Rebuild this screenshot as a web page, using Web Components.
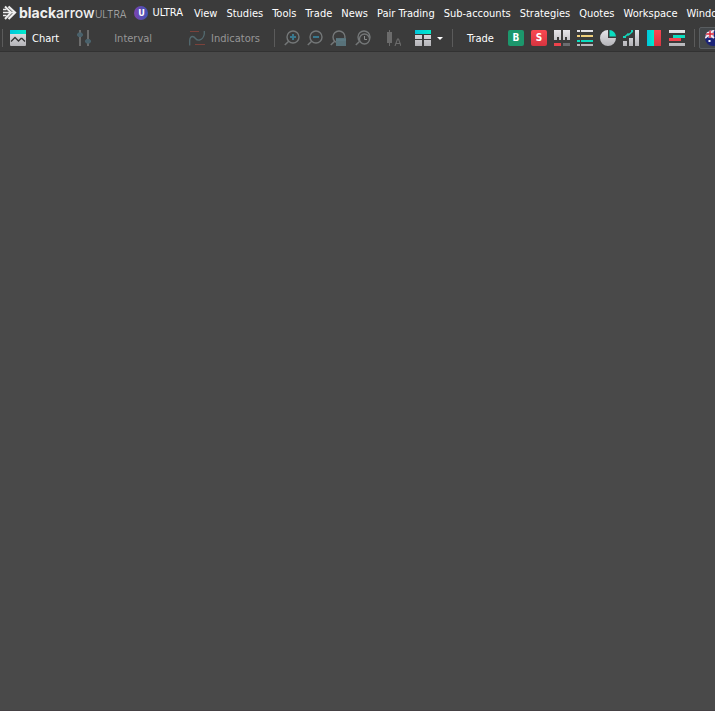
<!DOCTYPE html>
<html lang="en">
<head>
<meta charset="utf-8">
<title>blackarrow ULTRA</title>
<style>
html, body { height: 100%; margin: 0; }
body { background: #494949; overflow: hidden; font: 11px/16px "DejaVu Sans Condensed", "DejaVu Sans", sans-serif; color: #fff; }
</style>
</head>
<body>
<trading-app></trading-app>
<script>
const grad = '<defs><linearGradient id="g" x1="0" y1="0" x2="0" y2="16" gradientUnits="userSpaceOnUse"><stop stop-color="#e6e5e9"/><stop offset="1" stop-color="#b4b4b8"/></linearGradient><linearGradient id="c" x1="0" y1="0" x2="1" y2="0"><stop stop-color="#00c5dd"/><stop offset="1" stop-color="#00ecca"/></linearGradient><linearGradient id="r" x1="0" y1="0" x2="0" y2="1"><stop stop-color="#f94852"/><stop offset="1" stop-color="#d7343f"/></linearGradient></defs>';
const lens = '<circle cx="9" cy="7" r="6" fill="none" stroke="#747778" stroke-width="1.4"/><path d="M4.7 11.2L.8 15" stroke="#747778" stroke-width="1.5"/>';
const icons = {
  chart: '<rect width="16" height="16" rx="1" fill="url(#g)"/><rect width="16" height="4" fill="url(#c)"/><path d="M1 11.500L5 7.500L8.500 11L11 8.500L12 8.500L15 11.500" fill="none" stroke="#333" stroke-width="1.300"/>',
  sliders: '<path d="M4 0V16M12 0V16" stroke="#6c6c6c" stroke-width="2"/><path d="M2.500 2.500h3l1.500 1.500v1.500l-1.500 1.500h-3l-1.500-1.500v-1.500zM10.500 9h3l1.500 1.500v1.500l-1.500 1.500h-3l-1.500-1.500v-1.500z" fill="#4a626c"/>',
  indicators: '<path d="M1 1.500H10M6 14.500H16" stroke="#7b423b" stroke-width="1.200"/><path d="M.7 15.500V10.500Q1 6.500 3.500 6.500Q5 6.500 6.500 8.500T10.500 10Q14.500 9 15.300 4V1" fill="none" stroke="#536a70" stroke-width="1.300"/>',
  zoomIn: lens + '<path d="M9 4V10M6 7H12" stroke="#39788e" stroke-width="2"/>',
  zoomOut: lens + '<path d="M6 7H12" stroke="#39788e" stroke-width="2"/>',
  zoomArea: lens + '<rect x="6" y="8" width="10" height="8" fill="#58727a"/><path d="M6 10h10" stroke="#607f88"/>',
  zoomTime: lens + '<circle cx="9.500" cy="9" r="5" fill="#3b3b3b" stroke="#747778" stroke-width="1.300"/><path d="M9.500 6V9.500H12" fill="none" stroke="#8a8c8d"/>',
  candle: '<path d="M4.500 0V16" stroke="#6b6b6b"/><rect x="2" y="2" width="5" height="11" fill="#6b6b6b"/><path d="M10 16L12.500 9h1L16 16M11 13.500h4" fill="none" stroke="#6b6b6b" stroke-width="1.100"/>',
  grid: '<path d="M0 5h7v4H0zM9 5h7v4H9zM0 10h7v6H0zM9 10h7v6H9z" fill="url(#g)"/><rect width="16" height="4" fill="url(#c)"/>',
  buy: '<rect width="16" height="16" rx="2" fill="#1c976c"/>',
  sell: '<rect width="16" height="16" rx="2" fill="url(#r)"/>',
  ladder: '<path d="M0 0H7V10H5V7H3V10H0zM9 0H16V10H13V7H11V10H9z" fill="url(#g)"/><rect y="13" width="7" height="3" fill="#ed424b"/><rect x="9" y="13" width="7" height="3" fill="#6b6c6f"/>',
  list: '<path d="M0 0h3v2H0zM4 0h12v2H4zM0 14h3v2H0zM4 14h12v2H4z" fill="url(#g)"/><path d="M0 5h3v2H0zM4 5h12v2H4z" fill="#efcf7c"/><path d="M0 10h3v2H0zM4 10h12v2H4z" fill="#0bddc0"/>',
  pie: '<path d="M8 0A8 8 0 1 0 16 8H8z" fill="url(#g)"/><path d="M9.500 0A7 7 0 0 1 16 6.500H9.500z" fill="#0bddc0"/>',
  growth: '<path d="M0 11h4v5H0zM6 8h4v8H6zM12 0h4v16h-4z" fill="url(#g)"/><path d="M1.500 7L4.500 4.500H6L9.500 1.500" fill="none" stroke="#12d5ba" stroke-width="1.500"/><path d="M0 6h3v2H0zM4 3.500h2v2H4zM8 0h2v2H8z" fill="#12d5ba"/>',
  split: '<path d="M1 0H8V16H1z" fill="url(#c)"/><path d="M8 0H15V16H8z" fill="url(#r)"/>',
  gantt: '<path d="M0 0h16v3H0zM0 13h16v3H0z" fill="url(#g)"/><rect x="4" y="5" width="12" height="3" fill="#0bddc0"/><path d="M0 8h12v3H0z" fill="#f0444e"/>',
  brand: '<path d="M2 1.500L8 7.500L2 14" fill="none" stroke="#efefef" stroke-width="2"/><path d="M5.500 1.500L12 7.500L5.500 14" fill="none" stroke="#efefef" stroke-width="2.200"/><path d="M0 7.500H11M0 4.500H3.500M0 10.500H3.500" stroke="#efefef" stroke-width="1.600"/>',
  flag: '<clipPath id="d"><circle cx="8" cy="8" r="8"/></clipPath><g clip-path="url(#d)"><rect width="16" height="16" fill="#1b2378"/><path d="M0 0L9 8M9 0L0 8" stroke="#f5e9ef" stroke-width="2"/><path d="M5 0V8M0 4H9" stroke="#f5e9ef" stroke-width="3"/><path d="M5 0V8M0 4H9" stroke="#d92639" stroke-width="1.500"/><path d="M3.500 10h2v2h-2zM11 3h1.500v1.500H11zM12 11h1.500v1.500H12z" fill="#fff"/></g>'
};

customElements.define('app-icon', class extends HTMLElement {
  connectedCallback() {
    const name = this.getAttribute('name');
    const root = this.shadowRoot || this.attachShadow({ mode: 'open' });
    root.innerHTML = `<style>
      :host { display: grid; place-items: center; flex: none; width: 16px; height: 16px; font: bold 10px/16px "DejaVu Sans Condensed", sans-serif; }
      svg, span { grid-area: 1 / 1; }
      svg { display: block; width: 16px; height: 16px; }
      </style><svg viewBox="0 0 16 16" aria-hidden="true">${grad}${icons[name]}</svg><span><slot></slot></span>`;
  }
});

customElements.define('tool-button', class extends HTMLElement {
  connectedCallback() {
    const root = this.attachShadow({ mode: 'open' });
    const icon = this.getAttribute('icon');
    root.innerHTML = `<style>
      :host { display: block; flex: none; }
      button { display: flex; align-items: center; gap: 6px; height: 22px; padding: 0; border: 0; background: none; color: #fff; font: inherit; white-space: nowrap; }
      button:disabled { color: #969696; }
      .label { padding-top: 2px; }
      :host([boxed]) button { padding: 0 5px; border: 1px solid #595d60; border-radius: 2px; background: #43474a; }
      .caret { border: 3px solid transparent; border-top-color: #fff; border-bottom: 0; }
      </style><button type="button" ${this.hasAttribute('disabled') ? 'disabled' : ''} ${this.title ? `aria-label="${this.title}"` : ''}>
      ${icon ? `<app-icon name="${icon}">${this.getAttribute('letter') || ''}</app-icon>` : ''}${this.textContent ? '<span class="label"><slot></slot></span>' : ''}${this.hasAttribute('menu') ? '<i class="caret"></i>' : ''}</button>`;
  }
});

customElements.define('tool-separator', class extends HTMLElement {
  connectedCallback() {
    this.attachShadow({ mode: 'open' }).innerHTML = '<style>:host { display: block; flex: none; width: 1px; height: 18px; background: #5b5b5b; }</style>';
  }
});

customElements.define('tool-group', class extends HTMLElement {
  connectedCallback() {
    this.attachShadow({ mode: 'open' }).innerHTML = '<style>:host { display: flex; flex: none; align-items: center; gap: 7px; }</style><slot></slot>';
  }
});

customElements.define('brand-logo', class extends HTMLElement {
  connectedCallback() {
    this.attachShadow({ mode: 'open' }).innerHTML = `<style>
      :host { display: flex; flex: none; align-items: center; font: 14px/18px Inter, sans-serif; color: #efefef; }
      .name { width: 76px; }
      b { font-weight: 700; }
      .arrow { font-weight: 500; }
      .edition { font-size: 10px; font-weight: 300; color: #b0b0b0; padding-top: 2px; }
      </style><app-icon name="brand"></app-icon><span class="name"><b>black</b><span class="arrow">arrow</span></span><span class="edition">ULTRA</span>`;
  }
});

customElements.define('menu-bar', class extends HTMLElement {
  connectedCallback() {
    const items = this.getAttribute('items').split(',');
    this.attachShadow({ mode: 'open' }).innerHTML = `<style>
      :host { display: flex; align-items: center; height: 26px; padding-left: 3px; overflow: hidden; }
      nav { display: flex; flex: none; gap: 9px; padding-top: 2px; }
      button { padding: 0; border: 0; background: none; color: inherit; font: inherit; white-space: nowrap; }
      .account { display: flex; align-items: center; gap: 4px; margin: 0 11px 0 8px; }
      .badge { width: 14px; height: 14px; border-radius: 7px; background: linear-gradient(90deg, #7a44b0, #4054b5); font: bold 9px/14px "DejaVu Sans Condensed", sans-serif; text-align: center; }
      </style><brand-logo></brand-logo>
      <button type="button" class="account"><span class="badge">U</span><span>ULTRA</span></button>
      <nav>${items.map(t => `<button type="button">${t}</button>`).join('')}</nav>`;
  }
});

customElements.define('trading-app', class extends HTMLElement {
  connectedCallback() {
    this.attachShadow({ mode: 'open' }).innerHTML = `<style>
      :host { display: flex; flex-direction: column; height: 100%; }
      header { background: #3b3b3b; border-bottom: 1px solid #323232; overflow: hidden; }
      .tools { display: flex; align-items: center; height: 24px; padding: 0 0 1px 2px; }
      .s { margin-left: 7px; }
      .m { margin-left: 9px; }
      .l { margin-left: 14px; }
      .xl { margin-left: 17px; }
      .text { margin-left: 22px; }
      .far { margin-left: 37px; }
      main { flex: 1; background: #494949; border-bottom: 1px solid #454144; }
      </style>
      <header>
        <menu-bar items="View,Studies,Tools,Trade,News,Pair Trading,Sub-accounts,Strategies,Quotes,Workspace,Window"></menu-bar>
        <div class="tools" role="toolbar" aria-label="Tools">
          <tool-separator></tool-separator>
          <tool-button class="s" icon="chart">Chart</tool-button>
          <tool-button class="xl" icon="sliders" title="Chart type" disabled></tool-button>
          <tool-button class="text" disabled>Interval</tool-button>
          <tool-button class="far" icon="indicators" disabled>Indicators</tool-button>
          <tool-separator class="l"></tool-separator>
          <tool-group class="m">
            <tool-button icon="zoomIn" title="Zoom in" disabled></tool-button>
            <tool-button icon="zoomOut" title="Zoom out" disabled></tool-button>
            <tool-button icon="zoomArea" title="Zoom area" disabled></tool-button>
          </tool-group>
          <tool-button class="m" icon="zoomTime" title="Zoom time" disabled></tool-button>
          <tool-button class="l" icon="candle" title="Auto scale" disabled></tool-button>
          <tool-button class="l" icon="grid" title="Layout" menu></tool-button>
          <tool-separator class="m"></tool-separator>
          <tool-button class="l">Trade</tool-button>
          <tool-group class="l">
            <tool-button icon="buy" letter="B" title="Buy"></tool-button>
            <tool-button icon="sell" letter="S" title="Sell"></tool-button>
            <tool-button icon="ladder" title="Ladder"></tool-button>
            <tool-button icon="list" title="Orders"></tool-button>
            <tool-button icon="pie" title="Portfolio"></tool-button>
            <tool-button icon="growth" title="Performance"></tool-button>
            <tool-button icon="split" title="Depth"></tool-button>
            <tool-button icon="gantt" title="Market depth"></tool-button>
          </tool-group>
          <tool-separator class="m"></tool-separator>
          <tool-button style="margin-left:4px" icon="flag" title="Australia" boxed></tool-button>
        </div>
      </header>
      <main></main>`;
  }
});
</script>
</body>
</html>
